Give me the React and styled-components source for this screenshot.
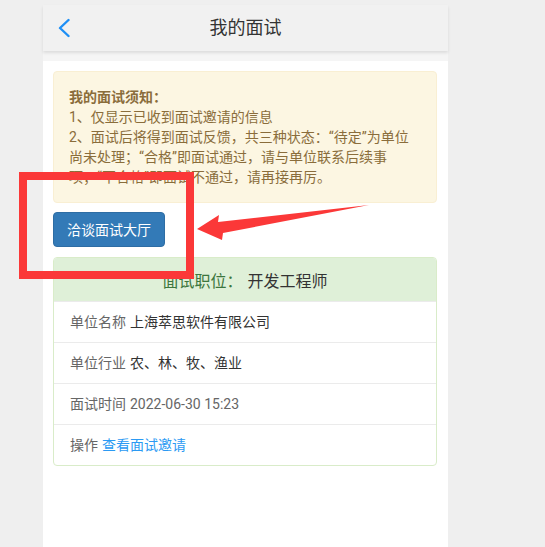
import React from "react";
import styled, { createGlobalStyle } from "styled-components";

const GlobalStyle = createGlobalStyle`
  html, body {
    margin: 0;
    padding: 0;
    background: #efefef;
    font-family: Roboto, "Noto Sans CJK SC", sans-serif;
  }
`;

const Page = styled.div`
  position: relative;
  width: 545px;
  height: 547px;
  overflow: hidden;
  padding-top: 5px;
  box-sizing: border-box;
`;

const Phone = styled.div`
  width: 405px;
  height: 542px;
  margin-left: 43px;
  background: #f5f5f5;
  display: flex;
  flex-direction: column;
`;

const Header = styled.header`
  height: 46px;
  flex: none;
  background: #f1f1f1;
  box-shadow: 0 2px 3px rgba(0, 0, 0, 0.1);
  display: grid;
  grid-template-columns: 1fr auto 1fr;
  align-items: center;
  padding: 0 15px;
  position: relative;
  z-index: 1;
`;

const Back = styled.button`
  justify-self: start;
  border: 0;
  background: none;
  padding: 0;
  display: flex;
  cursor: pointer;
`;

const Title = styled.h1`
  margin: 0;
  font-size: 18px;
  font-weight: 400;
  line-height: 24px;
  color: #333;
`;

const Content = styled.main`
  flex: 1;
  margin-top: 10px;
  background: #fff;
  padding: 10px 11px 10px 10px;
  display: flex;
  flex-direction: column;
  align-items: flex-start;
`;

const Notice = styled.div`
  align-self: stretch;
  background: #fcf6e2;
  border: 1px solid #f9efd3;
  border-radius: 4px;
  padding: 15px 15px;
  color: #8a6d3b;
  font-size: 14px;
  line-height: 20px;
  & strong {
    display: block;
    font-weight: 700;
  }
`;

const HallButton = styled.button`
  margin-top: 9px;
  height: 35px;
  padding: 0 13px;
  background: #337ab7;
  border: 1px solid #2e6da4;
  border-radius: 4px;
  color: #fff;
  font-family: inherit;
  font-size: 14px;
  line-height: 20px;
  cursor: pointer;
`;

const Card = styled.section`
  align-self: stretch;
  margin-top: 10px;
  border: 1px solid #d9ecc9;
  border-radius: 4px;
  overflow: hidden;
`;

const CardHead = styled.div`
  height: 43px;
  background: #dff0d8;
  display: flex;
  align-items: center;
  justify-content: center;
  font-size: 16px;
  color: #3c763d;
  & span {
    color: #333;
    margin-left: 5px;
  }
`;

const Row = styled.div`
  padding: 10px 16px;
  border-top: 1px solid #ebebeb;
  font-size: 14px;
  line-height: 20px;
  color: #666;
`;

const Value = styled.span`
  color: ${(p) => (p.link ? "#2b9af3" : p.muted ? "#666" : "#333")};
  margin-left: 4px;
  cursor: ${(p) => (p.link ? "pointer" : "default")};
`;

const Annotation = styled.svg`
  position: absolute;
  left: 0;
  top: 0;
  pointer-events: none;
`;

function Chevron() {
  return (
    <svg width="12" height="20" viewBox="0 0 12 20">
      <polyline
        points="10.5,2 2,10 10.5,18"
        fill="none"
        stroke="#1e8ff5"
        strokeWidth="2.4"
        strokeLinecap="round"
        strokeLinejoin="round"
      />
    </svg>
  );
}

const rows = [
  { label: "单位名称", value: "上海萃思软件有限公司" },
  { label: "单位行业", value: "农、林、牧、渔业" },
  { label: "面试时间", value: "2022-06-30 15:23", muted: true },
  { label: "操作", value: "查看面试邀请", link: true },
];

export default function App() {
  return (
    <>
      <GlobalStyle />
      <Page>
        <Phone>
          <Header>
            <Back type="button" aria-label="返回">
              <Chevron />
            </Back>
            <Title>我的面试</Title>
            <span />
          </Header>
          <Content>
            <Notice>
              <strong>我的面试须知：</strong>
              1、仅显示已收到面试邀请的信息
              <br />
              2、面试后将得到面试反馈，共三种状态：“待定”为单位尚未处理；“合格”即面试通过，请与单位联系后续事项；“不合格”即面试不通过，请再接再厉。
            </Notice>
            <HallButton type="button">洽谈面试大厅</HallButton>
            <Card>
              <CardHead>
                面试职位：<span>开发工程师</span>
              </CardHead>
              {rows.map((r) => (
                <Row key={r.label}>
                  {r.label}
                  <Value muted={r.muted} link={r.link}>
                    {r.value}
                  </Value>
                </Row>
              ))}
            </Card>
          </Content>
        </Phone>
        <Annotation width="545" height="547" viewBox="0 0 545 547">
          <rect x="23" y="176" width="167" height="99" fill="none" stroke="#fb3838" strokeWidth="8" />
          <polygon
            points="197,229 219,215 218,222 369,205 223,233 222,240"
            fill="#fb3838"
          />
        </Annotation>
      </Page>
    </>
  );
}
